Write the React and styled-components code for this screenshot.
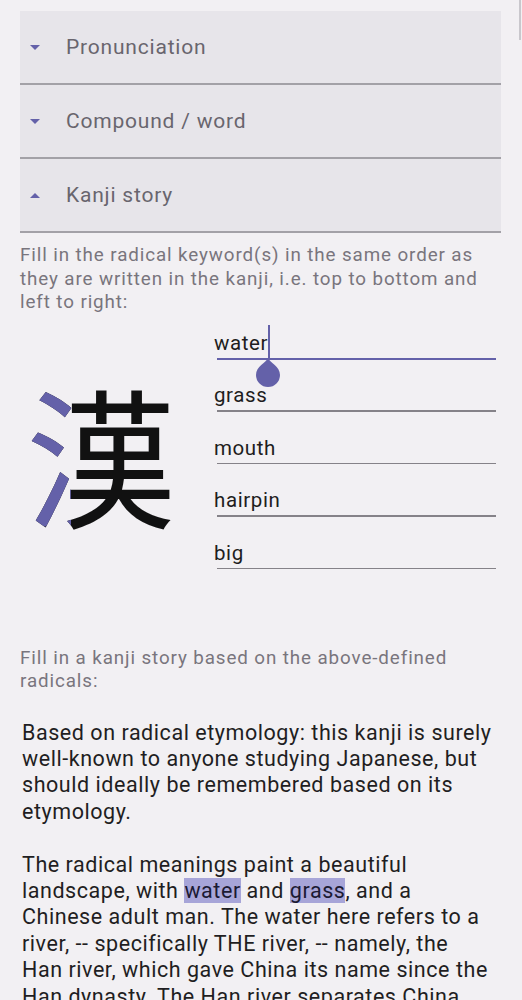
import React from "react";
import styled, { createGlobalStyle } from "styled-components";

const Global = createGlobalStyle`
  html, body { margin: 0; padding: 0; background: #f2f0f3; }
  body { font-family: Roboto, "Noto Sans", "Liberation Sans", sans-serif; -webkit-font-smoothing: antialiased; }
`;

const ACCENT = "#6461a9";

const Page = styled.div`
  padding: 11px 21px 0 20px;
  height: 1000px;
  overflow: hidden;
  box-sizing: border-box;
`;

const ScrollThumb = styled.div`
  position: fixed;
  top: 0;
  right: 1px;
  width: 2px;
  height: 40px;
  background: #c9c7cc;
`;

const Accordion = styled.div`
  display: flex;
  flex-direction: column;
`;

const Header = styled.div`
  height: 72px;
  display: flex;
  align-items: center;
  background: #e7e5ea;
  border-bottom: 2px solid #a3a1a7;
  color: #69656e;
  font-size: 21px;
  letter-spacing: 0.8px;
  box-sizing: content-box;
`;

const Arrow = styled.span`
  width: 0;
  height: 0;
  margin-left: 10px;
  margin-right: 26px;
  border-left: 5px solid transparent;
  border-right: 5px solid transparent;
  ${(p) =>
    p.$up
      ? `border-bottom: 5px solid ${ACCENT};`
      : `border-top: 5px solid ${ACCENT};`}
`;

const Hint = styled.p`
  margin: ${(p) => p.$mt || "0"} 0 0 0;
  color: #79757d;
  font-size: 18.8px;
  letter-spacing: 0.9px;
  line-height: 23.5px;
`;

const RadicalRow = styled.div`
  display: flex;
  align-items: flex-start;
`;

const KanjiBox = styled.div`
  width: 194px;
  flex-shrink: 0;
  padding-top: 62px;
  padding-left: 6px;
  box-sizing: border-box;
`;

const KanjiGlyph = styled.div`
  position: relative;
  font-family: "Noto Sans CJK JP", "Noto Sans CJK SC", sans-serif;
  font-size: 150px;
  line-height: 1;
  color: #111;
  width: 150px;
  height: 150px;
`;

const KanjiPart = styled.span`
  position: absolute;
  left: 0;
  top: 0;
  color: ${ACCENT};
  clip-path: inset(0 70% 0 0);
`;

const Fields = styled.div`
  flex: 1;
  display: flex;
  flex-direction: column;
  gap: 8.5px;
  margin-right: 5px;
`;

const Field = styled.div`
  position: relative;
  height: 44px;
  display: flex;
  align-items: flex-end;
  padding-bottom: 4px;
  box-sizing: border-box;
  &::after {
    content: "";
    position: absolute;
    left: 3px;
    right: 0;
    bottom: ${(p) => (p.$active ? "-1px" : "-0.5px")};
    height: ${(p) => (p.$active ? "2px" : "1.5px")};
    background: ${(p) => (p.$active ? ACCENT : "#858288")};
  }
`;

const FieldText = styled.span`
  position: relative;
  font-size: 20.5px;
  letter-spacing: 0.6px;
  line-height: 24px;
  color: #1e1d20;
`;

const Caret = styled.span`
  position: absolute;
  right: -2px;
  top: -6px;
  width: 2px;
  height: 35px;
  background: ${ACCENT};
`;

const Handle = styled.svg`
  position: absolute;
  right: -13px;
  top: 27px;
  width: 26px;
  height: 30px;
  z-index: 2;
`;

const Story = styled.div`
  margin-top: 26px;
  padding-left: 2px;
  padding-right: 7px;
  font-size: 21.5px;
  letter-spacing: 0.55px;
  line-height: 26.4px;
  color: #1f1e22;
`;

const Para = styled.p`
  margin: 0 0 26.4px 0;
`;

const Mark = styled.span`
  background: #a7a5d8;
  color: #1b1a33;
`;

const sections = [
  { label: "Pronunciation", open: false },
  { label: "Compound / word", open: false },
  { label: "Kanji story", open: true },
];

const radicals = ["water", "grass", "mouth", "hairpin", "big"];

export default function App() {
  return (
    <Page>
      <Global />
      <ScrollThumb />
      <Accordion>
        {sections.map((s) => (
          <Header key={s.label}>
            <Arrow $up={s.open} />
            {s.label}
          </Header>
        ))}
      </Accordion>
      <Hint $mt="11px">
        Fill in the radical keyword(s) in the same order as they are written
        in the kanji, i.e. top to bottom and left to right:
      </Hint>
      <RadicalRow>
        <KanjiBox>
          <KanjiGlyph>
            漢<KanjiPart>漢</KanjiPart>
          </KanjiGlyph>
        </KanjiBox>
        <Fields>
          {radicals.map((r, i) => (
            <Field key={r} $active={i === 0}>
              <FieldText>
                {r}
                {i === 0 && (
                  <>
                    <Caret />
                    <Handle viewBox="0 0 26 30">
                      <path
                        d="M13 0 C15 5 25 8 25 17 A12 12 0 0 1 1 17 C1 8 11 5 13 0 Z"
                        fill={ACCENT}
                      />
                    </Handle>
                  </>
                )}
              </FieldText>
            </Field>
          ))}
        </Fields>
      </RadicalRow>
      <Hint $mt="78px">
        Fill in a kanji story based on the above-defined radicals:
      </Hint>
      <Story>
        <Para>
          Based on radical etymology: this kanji is surely well-known to anyone
          studying Japanese, but should ideally be remembered based on its
          etymology.
        </Para>
        <Para>
          The radical meanings paint a beautiful landscape, with{" "}
          <Mark>water</Mark> and <Mark>grass</Mark>, and a Chinese adult man.
          The water here refers to a river, -- specifically THE river, --
          namely, the Han river, which gave China its name since the Han
          dynasty. The Han river separates China into north and south.
        </Para>
      </Story>
    </Page>
  );
}
